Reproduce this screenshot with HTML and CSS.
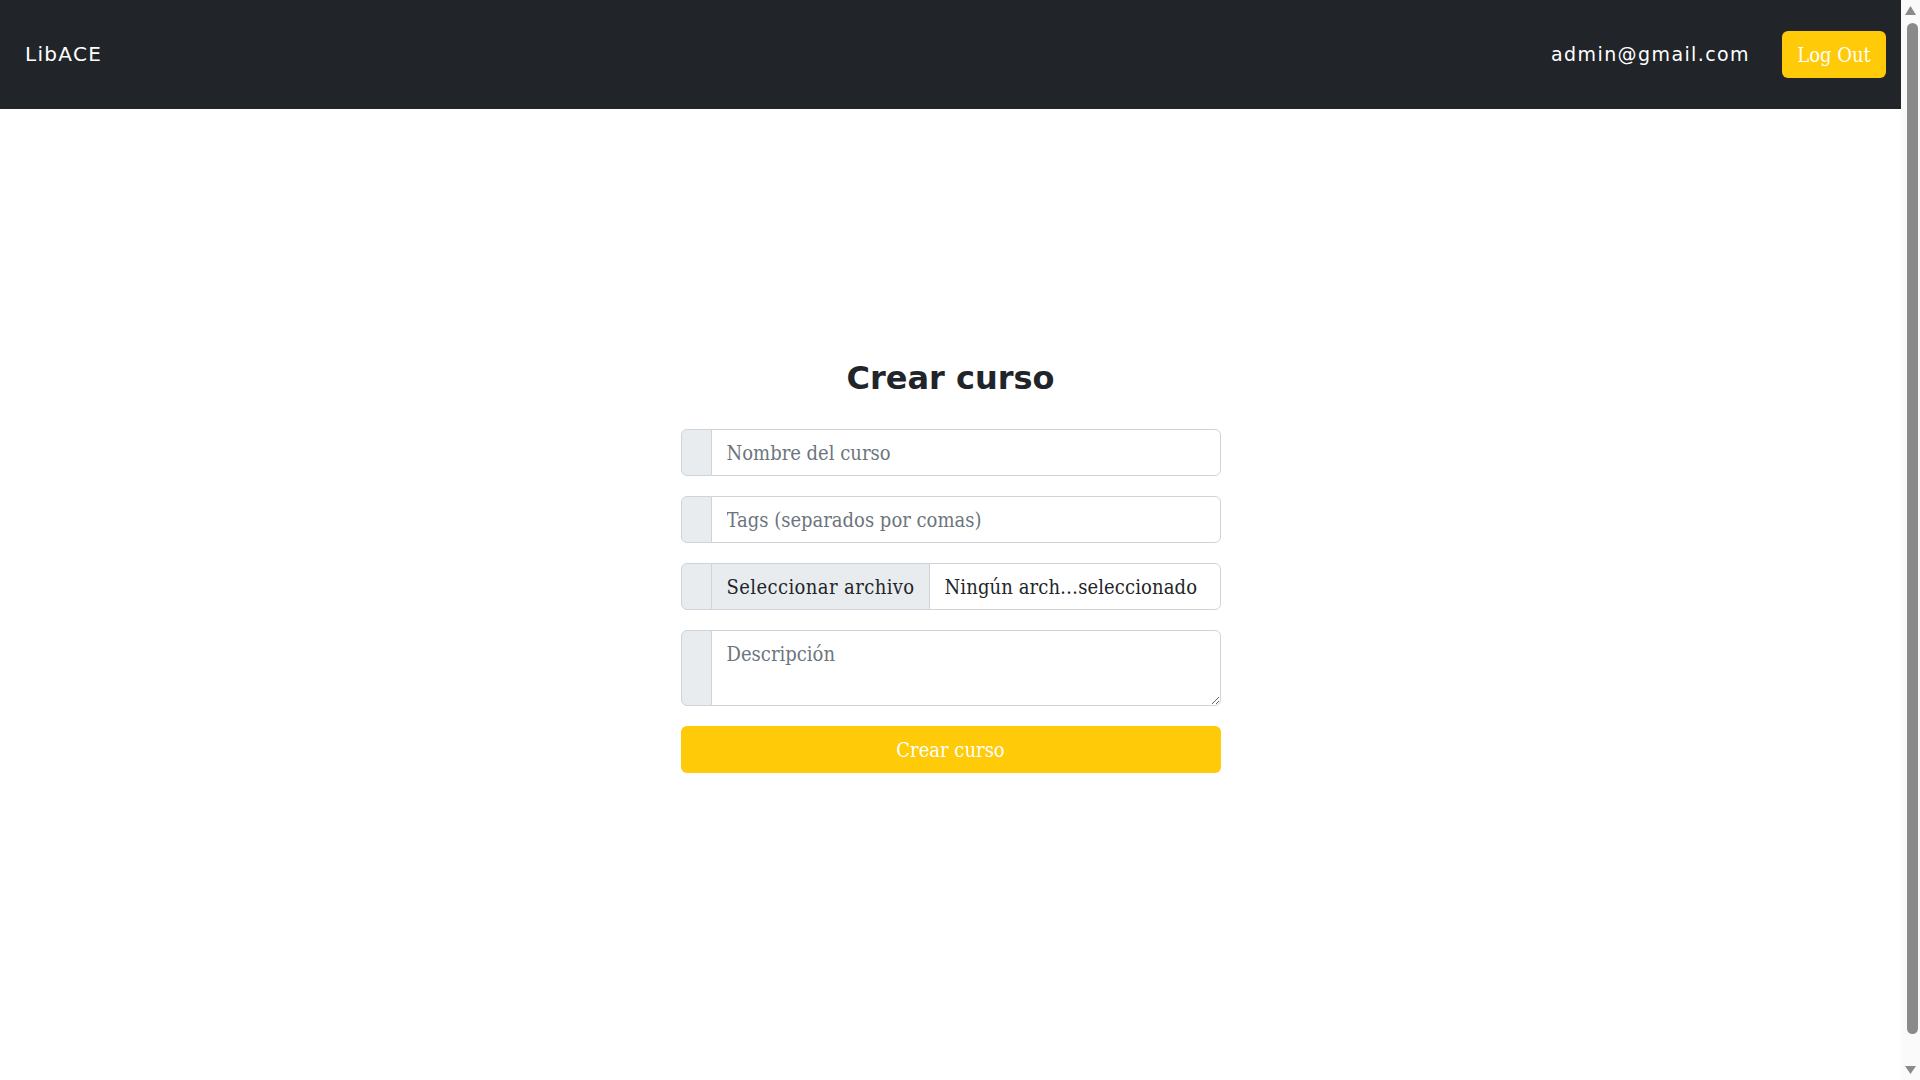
FILE: index.html
```html
<!DOCTYPE html>
<html lang="es">
<head>
<meta charset="utf-8">
<title>LibACE</title>
<link rel="stylesheet" href="styles.css">
</head>
<body>
<div class="app">
  <nav class="navbar">
    <a class="brand" href="#">LibACE</a>
    <div class="nav-right">
      <span class="user">admin@gmail.com</span>
      <button class="btn-logout" type="button">Log Out</button>
    </div>
  </nav>
  <main class="page">
    <form class="course-form">
      <h1 class="title">Crear curso</h1>
      <div class="input-group">
        <span class="addon"></span>
        <input class="control" type="text" placeholder="Nombre del curso">
      </div>
      <div class="input-group">
        <span class="addon"></span>
        <input class="control" type="text" placeholder="Tags (separados por comas)">
      </div>
      <div class="input-group">
        <span class="addon"></span>
        <label class="file-control">
          <span class="file-btn">Seleccionar archivo</span>
          <span class="file-name">Ningún arch…seleccionado</span>
        </label>
      </div>
      <div class="input-group tall">
        <span class="addon"></span>
        <textarea class="control area" placeholder="Descripción"></textarea>
      </div>
      <button class="btn-submit" type="button">Crear curso</button>
    </form>
  </main>
</div>
<div class="scrollbar" aria-hidden="true">
  <svg class="sb-arrow" width="19" height="20" viewBox="0 0 19 20"><polygon points="4,15 15,15 9.5,6" fill="#8a8a8a"/></svg>
  <div class="sb-thumb"></div>
  <svg class="sb-arrow" width="19" height="20" viewBox="0 0 19 20"><polygon points="4,6 15,6 9.5,14" fill="#8a8a8a"/></svg>
</div>
</body>
</html>
```
FILE: styles.css
```css
* { box-sizing: border-box; }
html, body { margin: 0; padding: 0; }
body {
  background: #fff;
  color: #212529;
  font-family: "DejaVu Serif", serif;
  overflow: hidden;
}
.app {
  margin-right: 19px;
}
.navbar {
  height: 109px;
  background: #212529;
  display: flex;
  align-items: center;
  justify-content: space-between;
  padding: 0 15px 0 25px;
}
.brand {
  color: #fff;
  text-decoration: none;
  font-family: "DejaVu Sans", sans-serif;
  font-size: 20px;
  letter-spacing: 1.3px;
  margin-top: -2px;
}
.nav-right {
  display: flex;
  align-items: center;
  gap: 32px;
}
.user {
  color: #fff;
  font-family: "DejaVu Sans", sans-serif;
  font-size: 19px;
  letter-spacing: 1.4px;
  margin-top: -2px;
}
.btn-logout {
  height: 47px;
  width: 104px;
  border: 0;
  border-radius: 6px;
  background: #ffca08;
  color: #fff;
  font-family: "DejaVu Serif Condensed", "DejaVu Serif", serif;
  font-size: 20px;
  padding: 1px 0 0;
}
.page {
  height: 971px;
  display: flex;
  justify-content: center;
  padding-top: 249px;
}
.course-form {
  width: 540px;
  display: flex;
  flex-direction: column;
  gap: 20px;
}
.title {
  margin: 0 0 11px;
  text-align: center;
  font-family: "DejaVu Sans", sans-serif;
  font-weight: bold;
  font-size: 32px;
  line-height: 40px;
  color: #212529;
}
.input-group {
  display: flex;
  height: 47px;
}
.input-group.tall { height: 76px; }
.addon {
  width: 31px;
  flex: none;
  background: #e9ecef;
  border: 1px solid #ced4da;
  border-radius: 6px 0 0 6px;
}
.control {
  flex: 1;
  min-width: 0;
  margin-left: -1px;
  border: 1px solid #ced4da;
  border-radius: 0 6px 6px 0;
  padding: 0 15px;
  font-family: "DejaVu Serif Condensed", "DejaVu Serif", serif;
  font-size: 20px;
  color: #212529;
  background: #fff;
  outline: none;
}
.control::placeholder { color: #6c757d; }
.area {
  padding-top: 8px;
  resize: vertical;
  height: 76px;
  line-height: 1.5;
}
.file-control {
  flex: 1;
  display: flex;
  margin-left: -1px;
  border: 1px solid #ced4da;
  border-radius: 0 6px 6px 0;
  overflow: hidden;
  font-family: "DejaVu Serif Condensed", "DejaVu Serif", serif;
  font-size: 20px;
  color: #212529;
  white-space: nowrap;
}
.file-btn {
  display: flex;
  align-items: center;
  padding: 0 15px;
  width: 218px;
  flex: none;
  background: #e9ecef;
  border-right: 1px solid #ced4da;
  letter-spacing: 0.4px;
}
.file-name {
  display: flex;
  align-items: center;
  padding-left: 15px;
  letter-spacing: 0.1px;
}
.btn-submit {
  height: 47px;
  border: 0;
  border-radius: 6px;
  background: #ffca08;
  color: #fff;
  font-family: "DejaVu Serif Condensed", "DejaVu Serif", serif;
  font-size: 20px;
}
.scrollbar {
  position: fixed;
  top: 0;
  right: 0;
  width: 19px;
  height: 100vh;
  background: #fafafa;
  display: flex;
  flex-direction: column;
  align-items: center;
}
.sb-arrow {
  flex: none;
  display: block;
}
.sb-thumb {
  flex: 1;
  width: 11px;
  margin: 3px 0 26px 3px;
  border-radius: 6px;
  background: #8a8a8a;
}
```
